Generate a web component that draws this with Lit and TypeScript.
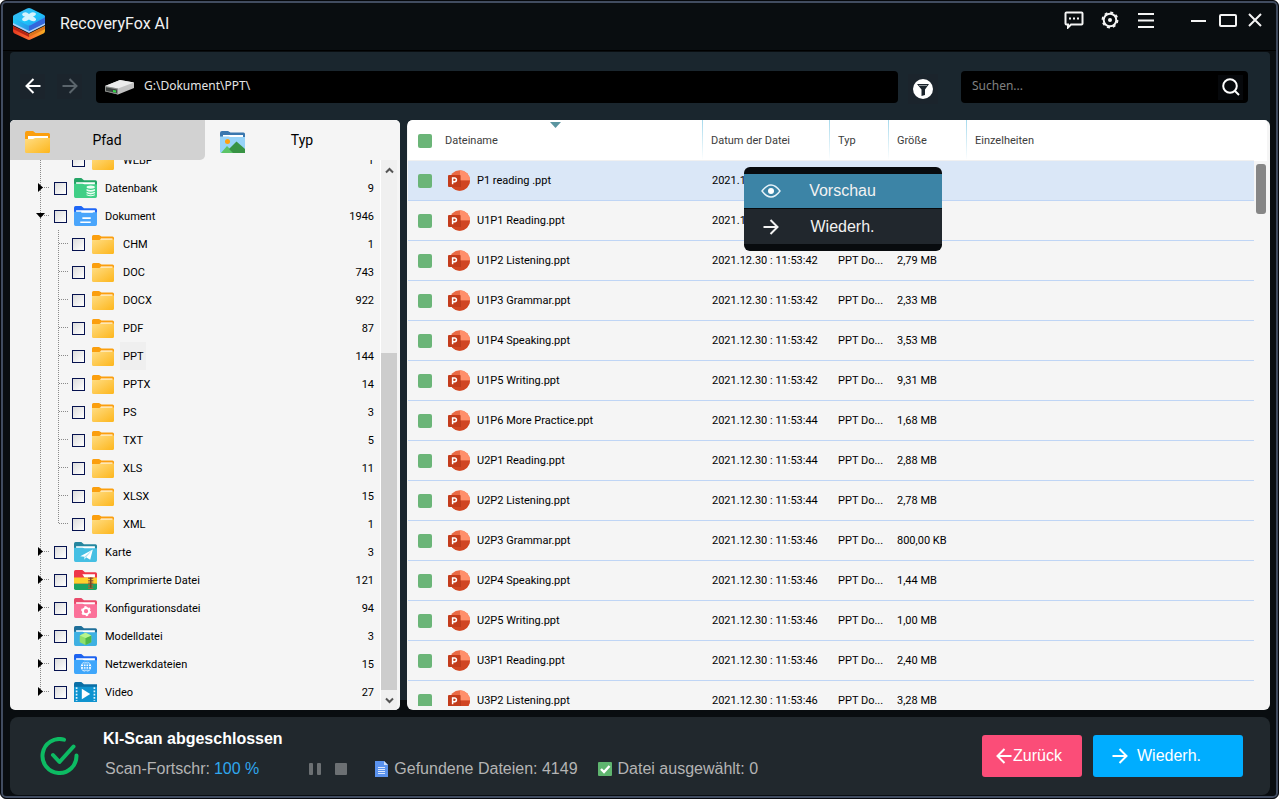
import { LitElement, html, svg, css, nothing } from "lit";
import { customElement } from "lit/decorators.js";
import { classMap } from "lit/directives/class-map.js";

const folder = (back: string, front: string, detail: unknown = nothing) => svg`
  <path d="M0 1.5Q0 0 1.5 0H7L9.5 2H20.5Q22 2 22 3.5V14H0Z" fill=${back} />
  <path d="M2 4H20V8H2Z" fill="#fff" />
  <path d="M0 5.5H8L10 6H22V17.5Q22 19 20.5 19H1.5Q0 19 0 17.5Z" fill=${front} />
  ${detail}`;

const plainFolder = html`<svg width="22" height="19" viewBox="0 0 22 19" aria-hidden="true">
  <defs>
    <linearGradient id="y" x1="0" y1="0" x2="1" y2="1">
      <stop offset="0" stop-color="#ffdd83" />
      <stop offset="1" stop-color="#fdb61c" />
    </linearGradient>
  </defs>
  <path d="M0 1.5Q0 0 1.5 0H7L9.5 1.5H20.5Q22 1.5 22 3V14H0Z" fill="#fb9f0e" />
  <path d="M9 3.5H20.5V7H7Z" fill="#fff" />
  <path d="M0 5H7L9 4.5H22V17.5Q22 19 20.5 19H1.5Q0 19 0 17.5Z" fill="url(#y)" />
</svg>`;

const icons: Record<string, unknown> = {
  db: folder("#25a566", "#40cf86", svg`
    <ellipse cx="16" cy="8.6" rx="4" ry="1.6" fill="#eafff3" />
    <path d="M12 10.4q4 2 8 0v1.800q-4 2-8 0zM12 13q4 2 8 0v1.600q-4 2-8 0zM12 15.500q4 2 8 0v1q-4 2-8 0z" fill="#eafff3" />`),
  doc: folder("#1f66f5", "#4aa5fb", svg`<path d="M7 5.500H18" stroke="#fff" stroke-width="1.600" /><path d="M8 11.500H16M6 15.500H16" stroke="#fff" stroke-width="1.500" />`),
  map: folder("#25869f", "#45bfe3", svg`<path d="M6 13.500L18 7L15.500 17L11.500 14.500L10 17V14Z" fill="#fff" /><path d="M10 14L18 7L11.500 14.500" fill="#a9e0f2" />`),
  zip: svg`
    <path d="M0 1.500Q0 0 1.500 0H8L10.500 2H20.500Q22 2 22 3.500V14H0Z" fill="#ee3648" />
    <path d="M8 4H20V7H10Z" fill="#fff" />
    <path d="M0 7H22V13H0Z" fill="#fdd12c" />
    <path d="M0 13H22V17.500Q22 19 20.500 19H1.500Q0 19 0 17.500Z" fill="#1ba462" />
    <path d="M16 7V18" stroke="#a3673a" stroke-width="5" stroke-dasharray="1.500 1" /><path d="M16 7V17" stroke="#7d4426" stroke-width="1.500" />`,
  conf: folder("#e94b6b", "#fb7199", svg`<circle cx="11.500" cy="12.500" r="3" fill="none" stroke="#fff" stroke-width="2" /><circle cx="11.500" cy="12.500" r="4.200" fill="none" stroke="#fff" stroke-width="1.200" stroke-dasharray="2.200 2.200" />`),
  model: folder("#1f6f99", "#3eb0e2", svg`
    <path d="M11 6.500L16.500 9V15.500L11 18L5.500 15.500V9Z" fill="#8ee06a" />
    <path d="M11 11.500L16.500 9V15.500L11 18Z" fill="#4fb848" />
    <path d="M11 6.500L16.500 9L11 11.500L5.500 9Z" fill="#b8f58d" />`),
  net: folder("#1e63f0", "#3ea6fb", svg`
    <circle cx="11.500" cy="12" r="5" fill="#fff" />
    <path d="M6.500 12H16.500M11.500 7V17M7.500 9.500H15.500M7.500 14.500H15.500" stroke="#3ea6fb" stroke-width=".9" />
    <ellipse cx="11.500" cy="12" rx="2.400" ry="5" fill="none" stroke="#3ea6fb" stroke-width=".9" />`),
  video: svg`
    <path d="M0 1.500Q0 0 1.500 0H7L9.500 2H22V14H0Z" fill="#0b6fa6" />
    <path d="M0 4.500H22V19H0Z" fill="#0f93cf" />
    <path d="M2.500 5V18M19.500 5V18" stroke="#dff4ff" stroke-width="1.600" stroke-dasharray="1.600 1.500" />
    <path d="M7.500 6.500L15.500 11.500L7.500 16.500Z" fill="#fff" />`,
};

interface Node {
  name: string;
  count: number;
  icon?: string;
  child?: boolean;
  open?: boolean;
  last?: boolean;
  active?: boolean;
}

const child = (name: string, count: number, extra: Partial<Node> = {}): Node => ({ name, count, child: true, ...extra });

const tree: Node[] = [
  child("WEBP", 1, { last: true }),
  { name: "Datenbank", count: 9, icon: "db" },
  { name: "Dokument", count: 1946, icon: "doc", open: true },
  child("CHM", 1),
  child("DOC", 743),
  child("DOCX", 922),
  child("PDF", 87),
  child("PPT", 144, { active: true }),
  child("PPTX", 14),
  child("PS", 3),
  child("TXT", 5),
  child("XLS", 11),
  child("XLSX", 15),
  child("XML", 1, { last: true }),
  { name: "Karte", count: 3, icon: "map" },
  { name: "Komprimierte Datei", count: 121, icon: "zip" },
  { name: "Konfigurationsdatei", count: 94, icon: "conf" },
  { name: "Modelldatei", count: 3, icon: "model" },
  { name: "Netzwerkdateien", count: 15, icon: "net" },
  { name: "Video", count: 27, icon: "video", last: true },
];

const files: [string, string, string][] = [
  ["P1 reading .ppt", "42", ""],
  ["U1P1 Reading.ppt", "42", ""],
  ["U1P2 Listening.ppt", "42", "2,79 MB"],
  ["U1P3 Grammar.ppt", "42", "2,33 MB"],
  ["U1P4 Speaking.ppt", "42", "3,53 MB"],
  ["U1P5 Writing.ppt", "42", "9,31 MB"],
  ["U1P6 More Practice.ppt", "44", "1,68 MB"],
  ["U2P1 Reading.ppt", "44", "2,88 MB"],
  ["U2P2 Listening.ppt", "44", "2,78 MB"],
  ["U2P3 Grammar.ppt", "46", "800,00 KB"],
  ["U2P4 Speaking.ppt", "46", "1,44 MB"],
  ["U2P5 Writing.ppt", "46", "1,00 MB"],
  ["U3P1 Reading.ppt", "46", "2,40 MB"],
  ["U3P2 Listening.ppt", "46", "3,28 MB"],
];

const arrow = (dir: "left" | "right") => html`<svg width="16" height="16" viewBox="0 0 16 16" fill="none" stroke="currentColor" stroke-width="2" aria-hidden="true">
  ${dir === "left" ? svg`<path d="M15.5 8H1.5M8.5 1L1.5 8L8.5 15" />` : svg`<path d="M.5 8H14.5M7.5 1L14.5 8L7.5 15" />`}
</svg>`;

const pptIcon = html`<svg width="22" height="21" viewBox="0 0 22 21" aria-hidden="true">
  <circle cx="11.7" cy="10.5" r="10.3" fill="#e96a45" />
  <path d="M12 .2A10.3 10.3 0 0 1 22 10.5H12Z" fill="#ff8f6b" />
  <path d="M1.400 10.5H22A10.3 10.3 0 0 1 1.400 10.5Z" fill="#d04522" />
  <path d="M5 5H12Q13 5 13 6V17H5Z" fill="#a83214" opacity=".5" />
  <rect x="0" y="5" width="12" height="12" rx="1" fill="#c33c1b" />
  <path d="M4.600 14.200V8H6.600A1.800 1.800 0 0 1 6.600 11.700H4.600" fill="none" stroke="#fff" stroke-width="1.500" />
</svg>`;

@customElement("file-tree")
export class FileTree extends LitElement {
  static styles = css`
    :host { display: flex; flex: 1; min-height: 0; overflow: hidden; }
    .list { flex: 1; list-style: none; margin: -14px 0 0; padding: 0; }
    .row { display: flex; align-items: center; height: 28px; padding-right: 6px; }
    .guide { display: block; flex: none; border: 0; padding: 0; background: none; height: 28px; }
    .guide svg { display: block; }
    .check {
      appearance: none; flex: none; box-sizing: border-box; width: 13px; height: 13px; margin: 0 6px 0 0;
      border: 1px solid #06124f; background: linear-gradient(135deg, #dcdcdc, #fff);
    }
    .icon { flex: none; display: flex; justify-content: center; width: 24px; }
    .name { flex: none; line-height: 26px; margin-left: 5px; padding: 2px 3px 0; }
    .active .name { background: #efefef; }
    .count { margin-left: auto; padding-top: 2px; }
    .bar { display: flex; flex-direction: column; width: 16px; flex: none; margin-right: 3px; background: #f0f0f0; border-left: 1px solid #fff; }
    .step { border: 0; padding: 0; background: none; height: 20px; display: flex; align-items: center; justify-content: center; }
    .track { flex: 1; display: flex; flex-direction: column; justify-content: flex-end; }
    .thumb { height: 66%; background: #cdcdcd; }
  `;

  private guide(n: Node) {
    const w = n.child ? 62 : 44;
    const end = n.last && !n.child ? 14 : 28;
    return html`<svg width=${w} height="28" viewBox="0 0 ${w} 28" aria-hidden="true">
      <g stroke="#8a8a8a" stroke-dasharray="1 1" fill="none">
        <path d="M30.5 0V${end}" />
        ${n.child ? svg`<path d="M48.5 0V${n.last ? 14 : 28}M49 13.5H58" />` : svg`<path d="M32 13.5H40" />`}
      </g>
      ${n.child ? nothing : n.open ? svg`<path d="M26 11H35L30.5 16Z" />` : svg`<path d="M28 9V18L33 13.5Z" />`}
    </svg>`;
  }

  render() {
    return html`
      <ul class="list">
        ${tree.map((n, i) => html`
          <li class=${classMap({ row: true, active: !!n.active })}>
            ${n.child
              ? html`<span class="guide">${this.guide(n)}</span>`
              : html`<button class="guide" aria-label="${n.name} umschalten">${this.guide(n)}</button>`}
            <input class="check" type="checkbox" id="n${i}" />
            <span class="icon">${n.icon
              ? html`<svg width="23" height="20" viewBox="0 0 22 19" aria-hidden="true">${icons[n.icon]}</svg>`
              : plainFolder}</span>
            <label class="name" for="n${i}">${n.name}</label>
            <span class="count">${n.count}</span>
          </li>`)}
      </ul>
      <div class="bar">
        <button class="step" aria-label="Nach oben"><svg width="9" height="7" fill="none" stroke="#555" stroke-width="2"><path d="M1 5.5L4.5 2L8 5.5" /></svg></button>
        <div class="track"><div class="thumb"></div></div>
        <button class="step" aria-label="Nach unten"><svg width="9" height="7" fill="none" stroke="#555" stroke-width="2"><path d="M1 1.5L4.5 5L8 1.5" /></svg></button>
      </div>`;
  }
}

@customElement("file-table")
export class FileTable extends LitElement {
  static styles = css`
    :host { display: block; position: relative; flex: 1; min-width: 0; background: #f5f5f5; border-radius: 6px; overflow: hidden; }
    .body { display: flex; position: absolute; inset: 0 3px 4px 1px; overflow: hidden; }
    .table { flex: 1; align-self: flex-start; min-width: 0; border-collapse: separate; border-spacing: 0; table-layout: fixed; }
    .c-check { width: 32px; }
    .c-name { width: 262px; }
    .c-date { width: 127px; }
    .c-type { width: 59px; }
    .c-size { width: 78px; }
    th {
      height: 41px; padding: 2px 0 0 9px; text-align: left; font-weight: 400; color: #3c3c3c; border-bottom: 1px solid #f0f0f0;
      background: linear-gradient(#a5d9ec, #fff) left / 1px 100% no-repeat, #fff; box-sizing: border-box;
    }
    .first { position: relative; background: #fff; padding-left: 10px; }
    .first span, .file { display: flex; align-items: center; }
    .sort { position: absolute; top: 2px; left: 50%; margin-left: -5px; }
    .first label { margin-left: 13px; }
    td { height: 40px; box-sizing: border-box; padding: 0 0 0 10px; border-bottom: 1px solid #bfd5f5; color: #000; white-space: nowrap; }
    .tight { padding-left: 9px; }
    .file { padding-left: 0; gap: 7px; }
    .namecell { padding-left: 8px; }
    .selected td { background: #dae7f7; }
    .check { appearance: none; display: block; flex: none; width: 14px; height: 14px; margin: 0; border-radius: 2px; background: #6bb578; }
    .bar { width: 13px; flex: none; background: linear-gradient(#fff 41px, #f5f5f5 41px); }
    .thumb { width: 10px; height: 50px; margin: 44px 0 0 2px; border-radius: 3px; background: #868686; }
    .menu {
      position: absolute; left: 337px; top: 47px; width: 198px; box-sizing: border-box; padding: 7px 0; margin: 0;
      background: #080b0e; border-radius: 6px; display: grid; gap: 1px;
    }
    .item {
      display: grid; grid-template-columns: 54px 89px; align-items: center; height: 35px; border: 0; padding: 0; background: #21272d;
      color: #f2f2f2; font: 16px "Liberation Sans", Arial, sans-serif;
    }
    .item svg { justify-self: center; }
    .item span { text-align: center; white-space: nowrap; }
    .hot { background: #3c84a6; height: 34px; }
  `;

  render() {
    return html`
      <div class="body">
        <table class="table">
          <colgroup>
            <col class="c-check" /><col class="c-name" /><col class="c-date" /><col class="c-type" /><col class="c-size" /><col />
          </colgroup>
          <thead>
            <tr>
              <th class="first" colspan="2">
                <span><input class="check" type="checkbox" id="all" /><label for="all">Dateiname</label></span>
                <svg class="sort" width="11" height="6" aria-hidden="true"><path d="M0 0H11L5.5 6Z" fill="#5b95a0" /></svg>
              </th>
              <th>Datum der Datei</th><th>Typ</th><th>Größe</th><th>Einzelheiten</th>
            </tr>
          </thead>
          <tbody>
            ${files.map(([name, sec, size], i) => html`
              <tr class=${classMap({ selected: i === 0 })}>
                <td><input class="check" type="checkbox" aria-label=${name} /></td>
                <td class="namecell"><span class="file">${pptIcon}<span>${name}</span></span></td>
                <td>2021.12.30 : 11:53:${sec}</td>
                <td class="tight">${size ? "PPT Do..." : nothing}</td>
                <td class="tight">${size}</td>
                <td></td>
              </tr>`)}
          </tbody>
        </table>
        <div class="bar"><div class="thumb"></div></div>
      </div>
      <div class="menu" role="menu">
        <button class="item hot" role="menuitem">
          <svg width="20" height="14" viewBox="0 0 20 14" fill="none" stroke="#e6f2f8" stroke-width="1.4" aria-hidden="true"><path d="M1 7Q10-5 19 7Q10 19 1 7Z" /><circle cx="10" cy="7" r="3" fill="#fff" stroke="none" /></svg>
          <span>Vorschau</span>
        </button>
        <button class="item" role="menuitem">${arrow("right")}<span>Wiederh.</span></button>
      </div>`;
  }
}

@customElement("app-root")
export class AppRoot extends LitElement {
  static styles = css`
    :host { display: block; height: 100vh; background: #fff; font: 11px/14px Roboto, Tahoma, sans-serif; color: #000; }
    button { font: inherit; cursor: pointer; }
    .window {
      display: flex; flex-direction: column; box-sizing: border-box; height: 100%; overflow: hidden;
      border: 1px solid #06080c; border-radius: 6px; background: #090d10; box-shadow: inset 0 0 0 2px #414c60; padding: 2px 2px 3px;
    }
    .header { display: flex; align-items: center; height: 48px; flex: none; border-bottom: 1px solid #000; padding: 0 14px 0 9px; box-sizing: border-box; }
    .logo { flex: none; margin-bottom: 6px; }
    .title { margin: 0 auto 5px 14px; font: 16px/20px Roboto, sans-serif; color: #f2f2f2; }
    .tools { display: flex; align-items: center; gap: 16px; margin-bottom: 13px; }
    .tool { display: flex; align-items: center; justify-content: center; width: 20px; height: 20px; padding: 0; border: 0; background: none; color: #f4f4f4; }
    .wide { margin-left: 16px; margin-right: -6px; }
    .close { margin-left: -9px; margin-right: -3px; }
    .main {
      flex: 1; min-height: 0; display: flex; flex-direction: column; margin: 1px 6px 0 7px; border-radius: 4px 4px 0 0;
      background: linear-gradient(#1a262e, #1a262e) top / 100% calc(100% - 10px) no-repeat;
    }
    .toolbar { display: flex; align-items: center; flex: none; padding: 18px 22px 16px 10px; }
    .nav { display: flex; align-items: center; justify-content: center; width: 25px; height: 25px; margin: 0 12px 2px 0; padding: 0; border: 0; background: #1b242c; color: #fff; }
    .off { color: #5b656c; }
    .field { display: flex; align-items: center; box-sizing: border-box; height: 32px; background: #000; border-radius: 4px; color: #e4e4e4; font-family: "Noto Sans", sans-serif; font-size: 12px; }
    .path { flex: 1; gap: 9px; margin-left: 2px; padding: 0 8px; }
    .input { flex: 1; min-width: 0; border: 0; padding: 0 0 2px; background: none; font: inherit; color: inherit; outline: none; }
    .input::placeholder { color: #808080; opacity: 1; }
    .filter { display: flex; align-items: center; justify-content: center; width: 30px; height: 30px; margin: 4px 23px 0 10px; padding: 0; border: 0; background: #1b242c; }
    .search { width: 287px; padding: 0 5px 0 11px; }
    .find { width: 25px; height: 25px; padding: 0; border: 0; background: #06080b; display: flex; align-items: center; justify-content: center; }
    .panels { display: flex; gap: 7px; flex: 1; min-height: 0; }
    .side { display: flex; flex-direction: column; width: 390px; flex: none; background: #f5f5f5; border-radius: 5px; overflow: hidden; box-sizing: border-box; }
    .tabs { display: grid; grid-template-columns: 1fr 1fr; flex: none; background: #f5f5f5; }
    .tab { display: flex; align-items: center; height: 40px; border: 0; background: none; padding: 4px 0 0 15px; font: 14px/18px Roboto, sans-serif; color: #000; }
    .tab span { flex: 1; padding: 0 41px 4px 0; }
    .tab:first-child { background: #d2d2d2; border-radius: 0 0 5px 0; }
    .footer {
      display: flex; align-items: center; flex: none; height: 78px; margin: 7px 6px 0 7px; padding: 0 27px 0 30px; box-sizing: border-box;
      border-radius: 8px; background: #21282d; font: 16px/20px "Liberation Sans", Arial, sans-serif; color: #b4b4b4;
    }
    .info { flex: 1; margin: 0 0 4px 24px; display: grid; gap: 10px; }
    .status { margin: 0; font-size: 16px; font-weight: 700; color: #fff; }
    .stats { display: flex; align-items: center; padding-left: 2px; }
    .percent { color: #2fa7ee; margin-left: 4px; }
    .player { display: flex; gap: 14px; margin: 0 28px 0 50px; }
    .small { display: flex; align-items: center; padding: 0; border: 0; background: none; }
    .stat { display: flex; align-items: center; gap: 6px; margin-right: 20px; }
    .action { display: flex; align-items: center; height: 42px; border: 0; border-radius: 3px; color: #fff; padding: 0; }
    .back { width: 100px; padding-left: 14px; gap: 1px; background: #fb4d78; }
    .go { width: 150px; gap: 9px; padding-left: 19px; margin-left: 11px; background: #00adff; }
  `;

  render() {
    return html`
      <div class="window">
        <header class="header">
          <svg class="logo" width="34" height="34" viewBox="0 0 34 34" aria-hidden="true">
            <defs>
              <linearGradient id="lb" x1="0" x2="1"><stop offset="0" stop-color="#22c7f5" /><stop offset="1" stop-color="#2e5fd8" /></linearGradient>
              <linearGradient id="lt" x1="0" y1="0" x2="1" y2="1"><stop offset="0" stop-color="#3fb4ee" /><stop offset=".6" stop-color="#1cc4fa" /><stop offset="1" stop-color="#2f8ff0" /></linearGradient>
              <linearGradient id="lr" x1="0" x2="1"><stop offset="0" stop-color="#e5391f" /><stop offset=".5" stop-color="#ff6a33" /><stop offset="1" stop-color="#f6ae20" /></linearGradient>
            </defs>
            <path d="M1 19L17 27L33 19V24Q33 25.500 31.500 26.500L18.500 32.500Q17 33.300 15.500 32.500L2.500 26.500Q1 25.500 1 24Z" fill="url(#lr)" />
            <path d="M1 19L17 27V30L1 22Z" fill="#b52415" />
            <path d="M17 27L33 19V22L17 30Z" fill="#d9731c" />
            <path d="M1 15L17 23L33 15V18L17 26L1 18Z" fill="#a9cdf8" />
            <path d="M1 9L17 17L33 9V16L17 24L1 16Z" fill="url(#lb)" />
            <path d="M17 17L33 9V16L17 24Z" fill="#3367dc" />
            <path d="M15 1.600Q17 .6 19 1.600L32 8Q34 9.500 32 11L19 18Q17 19 15 18L2 11Q0 9.500 2 8Z" fill="url(#lt)" />
            <path d="M11 6Q14 4 17 7Q20 4 23.500 6Q25 8 21 9.500Q26 12 23 14Q20 15 17 12.500Q13 15.500 10.500 13.500Q9 11.500 13 9.800Q8.500 8 11 6Z" fill="#d4f3fd" />
          </svg>
          <h1 class="title">RecoveryFox AI</h1>
          <nav class="tools">
            <button class="tool" aria-label="Feedback"><svg width="20" height="18" viewBox="0 0 20 18" fill="none" stroke="currentColor" stroke-width="2"><path d="M2.500 1.500H17.500Q18.500 1.500 18.500 2.500V12.500Q18.500 13.500 17.500 13.500H7L4 16.500V13.500H2.500Q1.500 13.500 1.500 12.500V2.500Q1.500 1.500 2.500 1.500Z" /><path d="M5 7.500H7M9 7.500H11M13 7.500H15" /></svg></button>
            <button class="tool" aria-label="Einstellungen"><svg width="18" height="18" viewBox="0 0 18 18" fill="none" stroke="currentColor"><circle cx="9" cy="9" r="6.300" stroke-width="2" /><circle cx="9" cy="9" r="7.600" stroke-width="1.600" stroke-dasharray="3 2.970" /><circle cx="9" cy="9" r="2" fill="currentColor" stroke="none" /></svg></button>
            <button class="tool" aria-label="Menü"><svg width="16" height="15" fill="none" stroke="currentColor" stroke-width="2"><path d="M0 1H16M0 7.500H16M0 14H16" /></svg></button>
            <button class="tool wide" aria-label="Minimieren"><svg width="17" height="15"><path d="M1 8H16" stroke="currentColor" stroke-width="2" /></svg></button>
            <button class="tool" aria-label="Maximieren"><svg width="18" height="13"><rect x="1" y="1" width="16" height="11" rx="1" fill="none" stroke="currentColor" stroke-width="2" /></svg></button>
            <button class="tool close" aria-label="Schließen"><svg width="14" height="14"><path d="M1 1L13 13M13 1L1 13" stroke="currentColor" stroke-width="2" /></svg></button>
          </nav>
        </header>
        <main class="main">
          <div class="toolbar">
            <button class="nav" aria-label="Zurück">${arrow("left")}</button>
            <button class="nav off" aria-label="Vorwärts">${arrow("right")}</button>
            <div class="field path">
              <svg width="31" height="16" viewBox="0 0 31 16" aria-hidden="true">
                <path d="M1 7L16 1L30 3.500V9L14 15.500L1 12Z" fill="#c2c2c2" />
                <path d="M1 7L16 1L30 3.500L14 9.500Z" fill="#ececec" />
                <path d="M1 7L14 9.500V15.500L1 12.500Z" fill="#8b8e8c" />
                <path d="M2 8.300L13 10.500V14L2 11.800Z" fill="#3f4442" />
                <path d="M9 11L12 11.600V13.500L9 12.900Z" fill="#35d94a" />
              </svg>
              <input class="input" aria-label="Pfad" value="G:\\Dokument\\PPT\\" />
            </div>
            <button class="filter" aria-label="Filter"><svg width="20" height="20"><circle cx="10" cy="10" r="10" fill="#fff" /><path d="M4 5H16L12 10.500V16L8.500 17V10.500Z" fill="#1b242c" /><path d="M6 6.500H14" stroke="#8d9498" /></svg></button>
            <div class="field search">
              <input class="input" aria-label="Suchen" placeholder="Suchen..." />
              <button class="find" aria-label="Suche starten"><svg width="18" height="18" fill="none" stroke="#fff" stroke-width="2"><circle cx="8" cy="8" r="6.800" /><path d="M12.500 12.500L17 17" /></svg></button>
            </div>
          </div>
          <div class="panels">
            <section class="side">
              <div class="tabs" role="tablist">
                <button class="tab" role="tab">
                  <svg width="25" height="22" viewBox="0 0 25 22" aria-hidden="true">
                    <defs><linearGradient id="ty" x1="0" y1="0" x2="1" y2="1"><stop offset="0" stop-color="#ffdd83" /><stop offset="1" stop-color="#fdb61c" /></linearGradient></defs>
                    <path d="M0 2Q0 0 2 0H8L10.500 2H23.500Q25 2 25 3.500V14H0Z" fill="#fb9f0e" />
                    <path d="M3 5H23V9H3Z" fill="#fff" />
                    <path d="M0 8H8L10 7H25V20.500Q25 22 23.500 22H1.500Q0 22 0 20.500Z" fill="url(#ty)" />
                  </svg>
                  <span>Pfad</span>
                </button>
                <button class="tab" role="tab" aria-selected="true">
                  <svg width="25" height="22" viewBox="0 0 25 22" aria-hidden="true">
                    <path d="M0 2Q0 0 2 0H8L10.500 1.500H23.500Q25 1.500 25 3V14H0Z" fill="#3a77ae" />
                    <path d="M3 4H23V7H3Z" fill="#fff" />
                    <path d="M0 5.500H9L10 6H25V20.500Q25 22 23.500 22H1.500Q0 22 0 20.500Z" fill="#97d3f8" />
                    <circle cx="7.500" cy="10.500" r="2.500" fill="#ffa010" />
                    <path d="M1 22L7 15L14 22Z" fill="#5cc467" /><path d="M9 18L16.500 10.500L25 18V22H13Z" fill="#389344" />
                  </svg>
                  <span>Typ</span>
                </button>
              </div>
              <file-tree></file-tree>
            </section>
            <file-table></file-table>
          </div>
        </main>
        <footer class="footer">
          <svg width="39" height="38" viewBox="0 0 39 38" fill="none" stroke="#0dbb63" stroke-width="4" stroke-linecap="round" stroke-linejoin="round" aria-hidden="true">
            <path d="M24 2.600A17 17 0 1 0 36.500 18.500" /><path d="M13 18L19.500 25L33.500 9.500" />
          </svg>
          <div class="info">
            <h2 class="status">KI-Scan abgeschlossen</h2>
            <div class="stats">
              <span>Scan-Fortschr:</span><span class="percent">100 %</span>
              <div class="player">
                <button class="small" aria-label="Pause"><svg width="12" height="12" fill="#6c7073"><rect width="4" height="12" rx="1" /><rect x="8" width="4" height="12" rx="1" /></svg></button>
                <button class="small" aria-label="Stopp"><svg width="12" height="12" fill="#6c7073"><rect width="12" height="12" rx="1" /></svg></button>
              </div>
              <span class="stat"><svg width="13" height="16" aria-hidden="true"><path d="M0 0H9L13 4V16H0Z" fill="#5b93ee" /><path d="M9 0L13 4H9Z" fill="#cfe0fb" /><path d="M3 6.500H10M3 8.500H10M3 10.500H10M3 12.500H10" stroke="#dbe8fd" /></svg>Gefundene Dateien: 4149</span>
              <span class="stat"><svg width="14" height="14" aria-hidden="true"><rect width="14" height="14" rx="1" fill="#5fb56f" /><path d="M3 7L6 10L11.500 4" fill="none" stroke="#fff" stroke-width="2.400" /></svg>Datei ausgewählt: 0</span>
            </div>
          </div>
          <button class="action back">${arrow("left")}Zurück</button>
          <button class="action go">${arrow("right")}Wiederh.</button>
        </footer>
      </div>`;
  }
}
